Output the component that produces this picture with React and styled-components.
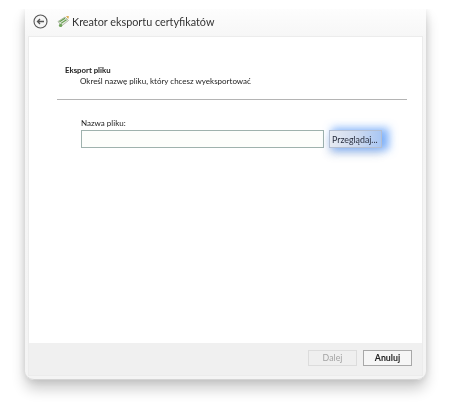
import React from "react";
import styled, { createGlobalStyle } from "styled-components";

const Global = createGlobalStyle`
  html, body { margin: 0; padding: 0; background: #fff; }
  body { width: 452px; height: 404px; overflow: hidden; font-family: Lato, "Open Sans", sans-serif; color: #222; }
`;

const Page = styled.div`
  width: 452px;
  height: 404px;
  box-sizing: border-box;
  padding: 9px 26px 24px 25px;
  filter: blur(0.35px);
`;

const Window = styled.div`
  height: 100%;
  display: flex;
  flex-direction: column;
  box-sizing: border-box;
  padding: 0 4px 4px 4px;
  background: linear-gradient(#fdfdfd, #f6f6f6 30px, #f4f4f4);
  border-radius: 0 0 9px 9px;
  border-bottom: 1px solid #d4d4d4;
  box-shadow: 0 9px 14px rgba(0, 0, 0, 0.2), 0 0 9px rgba(0, 0, 0, 0.12);
  clip-path: inset(0 -30px -30px -30px);
`;

const TitleBar = styled.header`
  height: 28px;
  flex: none;
  display: flex;
  align-items: center;
  box-sizing: border-box;
  padding: 0 0 3px 4px;
`;

const BackIcon = styled.svg`
  width: 15px;
  height: 15px;
  flex: none;
`;

const CertIcon = styled.svg`
  width: 13px;
  height: 13px;
  flex: none;
  margin-left: 9px;
`;

const Title = styled.h1`
  margin: 0 0 0 2px;
  font-size: 10.8px;
  font-weight: 400;
  color: #333;
  white-space: nowrap;
`;

const Body = styled.main`
  flex: 1;
  background: #fff;
  display: flex;
  flex-direction: column;
  box-shadow: 0 0 0 1px #ececec;
`;

const Intro = styled.section`
  margin: 28px 15px 0 28px;
  height: 34px;
  border-bottom: 1px solid #b4b4b4;
`;

const Heading = styled.h2`
  margin: 0 0 0 8px;
  font-size: 7.8px;
  line-height: 10px;
  font-weight: 700;
  color: #222;
`;

const Description = styled.p`
  margin: 1px 0 0 23px;
  font-size: 8px;
  line-height: 11px;
  color: #222;
`;

const Form = styled.section`
  margin: 17px 0 0 52px;
`;

const FieldLabel = styled.label`
  display: block;
  font-size: 8px;
  line-height: 12px;
  color: #222;
  margin-bottom: 1px;
`;

const FieldRow = styled.div`
  display: flex;
  align-items: center;
  gap: 5px;
`;

const FileInput = styled.div`
  width: 241px;
  height: 16px;
  background: #fdfefb;
  border: 1px solid #9fb2ad;
`;

const BrowseButton = styled.button`
  width: 53px;
  height: 18px;
  padding: 0 0 0 2px;
  text-align: left;
  font: 400 8.8px Lato, sans-serif;
  color: #2a3040;
  background: linear-gradient(90deg, #e6eaf2, #ccd9ef 55%, #a9c7f4);
  border: 1px solid #b4bfd2;
  box-shadow: 5px 0 8px 2px rgba(80, 150, 250, 0.7), 0 6px 10px rgba(60, 90, 150, 0.2);
`;

const Footer = styled.footer`
  height: 32px;
  flex: none;
  box-sizing: border-box;
  margin-top: auto;
  background: #f0f0f0;
  display: flex;
  justify-content: flex-end;
  align-items: center;
  gap: 6px;
  padding: 0 10px 3px 0;
`;

const DialogButton = styled.button`
  width: 49px;
  height: 16px;
  padding: 0;
  font: ${(p) => (p.disabled ? 400 : 700)} 8.8px Lato, sans-serif;
  color: ${(p) => (p.disabled ? "#a3a3a3" : "#222")};
  background: ${(p) => (p.disabled ? "#efefef" : "#f6f6f6")};
  border: 1px solid ${(p) => (p.disabled ? "#dcdcdc" : "#a8a8a8")};
`;

const App = () => {
  return (
    <>
      <Global />
      <Page>
        <Window>
          <TitleBar>
            <BackIcon viewBox="0 0 15 15">
              <circle cx="7.5" cy="7.5" r="6.5" fill="#f6f6f6" stroke="#555" strokeWidth="1.1" />
              <path d="M11 7.5H4.5M7 5 4.5 7.5 7 10" fill="none" stroke="#555" strokeWidth="1.3" />
            </BackIcon>
            <CertIcon viewBox="0 0 13 13">
              <path d="M1 6.5 8 2 11.5 5.5 4.5 11Z" fill="#e4e8de" stroke="#8b9a80" strokeWidth="0.6" />
              <path d="M2.5 6.8 8 3.2M4 8.4 9.5 4.8" stroke="#5f9e4a" strokeWidth="1.1" />
              <path d="M9 1 12 1.2 11.2 4Z" fill="#d9a441" />
              <circle cx="3.6" cy="10.4" r="1.7" fill="#6fa35a" />
            </CertIcon>
            <Title>Kreator eksportu certyfikatów</Title>
          </TitleBar>
          <Body>
            <Intro>
              <Heading>Eksport pliku</Heading>
              <Description>Określ nazwę pliku, który chcesz wyeksportować</Description>
            </Intro>
            <Form>
              <FieldLabel>Nazwa pliku:</FieldLabel>
              <FieldRow>
                <FileInput />
                <BrowseButton>Przeglądaj...</BrowseButton>
              </FieldRow>
            </Form>
            <Footer>
              <DialogButton disabled>Dalej</DialogButton>
              <DialogButton>Anuluj</DialogButton>
            </Footer>
          </Body>
        </Window>
      </Page>
    </>
  );
};

export default App;
